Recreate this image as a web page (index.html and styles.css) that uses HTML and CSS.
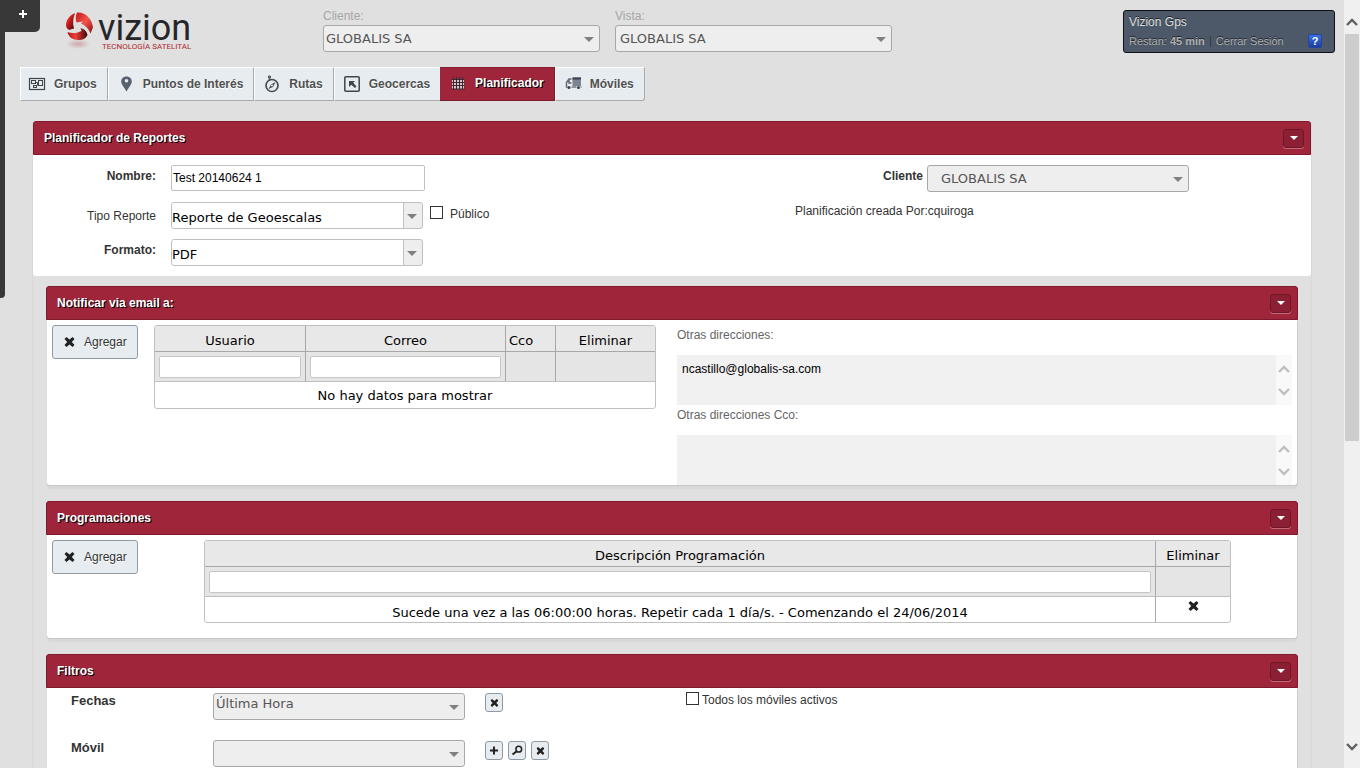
FILE: index.html
```html
<!DOCTYPE html>
<html lang="es">
<head>
<meta charset="utf-8">
<title>Vizion - Planificador</title>
<link rel="stylesheet" href="styles.css">
</head>
<body>
<svg class="defs" width="0" height="0" aria-hidden="true">
  <symbol id="i-cross" viewBox="0 0 10 10"><path d="M0 2 2 0 5 2.6 8 0 10 2 7.3 5 10 8 8 10 5 7.4 2 10 0 8 2.7 5z" fill="#222"/></symbol>
  <symbol id="i-caret" viewBox="0 0 8 4"><path d="M0 0h8L4 4z" fill="#fff"/></symbol>
  <symbol id="i-up" viewBox="0 0 12 8"><path d="M1 7 6 2l5 5" fill="none" stroke="currentColor" stroke-width="2.4"/></symbol>
  <symbol id="i-down" viewBox="0 0 12 8"><path d="M1 1l5 5 5-5" fill="none" stroke="currentColor" stroke-width="2.4"/></symbol>
</svg>

<div class="app">
  <header class="top">
    <svg class="logo" viewBox="0 0 130 46" role="img" aria-label="vizion tecnología satelital">
      <defs>
        <linearGradient id="ga" x1="0" y1="0" x2="1" y2="1"><stop offset="0" stop-color="#c2161b"/><stop offset=".5" stop-color="#f2564c"/><stop offset="1" stop-color="#8d0d12"/></linearGradient>
        <linearGradient id="gb" x1="0" y1="0" x2="1" y2="0"><stop offset="0" stop-color="#b3151a"/><stop offset=".4" stop-color="#f0403a"/><stop offset="1" stop-color="#3d0508"/></linearGradient>
        <linearGradient id="gc" x1="0" y1="0" x2="1" y2="1"><stop offset="0" stop-color="#f5766c"/><stop offset=".4" stop-color="#d01e20"/><stop offset="1" stop-color="#3a0406"/></linearGradient>
        <radialGradient id="gr"><stop offset="0" stop-color="#b0545a" stop-opacity=".4"/><stop offset="1" stop-color="#b0545a" stop-opacity="0"/></radialGradient>
      </defs>
      <ellipse cx="14" cy="35" rx="12" ry="5" fill="url(#gr)"/>
      <path d="M11 4C6 6 2 11 2 16c0 2 1 4 3 5l5-1.500c-1.500-5-1-10 1-15.500z" fill="url(#gc)"/>
      <path d="M13 3.500c8-1 15 6 16 15l-2.500 6c-2-5-5-8-9.500-10l2-2-6.500 1c-1-3-1-7 .5-10z" fill="url(#ga)"/>
      <path d="M3.500 23c6 2 10 1 14-1l-1-3c4 1 6 3 7 7-2 4-5 5-9 5-6 0-10-3-11-8z" fill="url(#gb)"/>
      <text x="34" y="31" class="logo-name">vizion</text>
      <text x="38" y="40" class="logo-tag">TECNOLOGÍA SATELITAL</text>
    </svg>
    <div class="field">
      <label for="cliente">Cliente:</label>
      <span class="combo"><select id="cliente"><option>GLOBALIS SA</option></select></span>
    </div>
    <div class="field">
      <label for="vista">Vista:</label>
      <span class="combo"><select id="vista" class="pad-l"><option>GLOBALIS SA</option></select></span>
    </div>
    <div class="user">
      <div class="user-name">Vizion Gps</div>
      <div class="user-line">
        <span>Restan: <b>45 min</b></span><i class="sep"></i><a href="#">Cerrar Sesión</a>
        <button class="help" type="button">?</button>
      </div>
    </div>
  </header>

  <nav class="tabs">
    <a href="#"><svg viewBox="0 0 18 18"><g fill="none" stroke="#3f454b"><rect x="1.500" y="3.500" width="15" height="11" stroke-width="1.200"/><rect x="3.500" y="5.500" width="4" height="3"/><rect x="10.500" y="5.500" width="4" height="5"/><rect x="5.500" y="10.500" width="3" height="2"/><path d="M7.500 7.500h2v3"/></g></svg>Grupos</a>
    <a href="#"><svg viewBox="0 0 18 18"><path d="M9.500 1.500c-3.200 0-5.300 2.200-5.300 5 0 3 3 5.500 5.300 10 2.300-4.500 5.300-7 5.300-10 0-2.800-2.100-5-5.300-5z" fill="#59616f"/><circle cx="9.500" cy="5.800" r="1.800" fill="#e6ecef"/></svg>Puntos de Interés</a>
    <a href="#"><svg viewBox="0 0 18 18"><g fill="none" stroke="#474d53" stroke-width="1.700"><circle cx="9" cy="10.500" r="6"/><path d="M6 3.500 7.200 5"/><circle cx="6.500" cy="2" r="1" stroke-width="1.200"/></g><path d="M12.500 7 10 12l-4.500 2L8 9.500z" fill="#474d53"/><circle cx="9" cy="10.500" r="1" fill="#e6ecef"/></svg>Rutas</a>
    <a href="#"><svg viewBox="0 0 18 18"><rect x="1.800" y="1.800" width="14.400" height="14.400" rx="1" fill="none" stroke="#3f454b" stroke-width="1.500"/><path d="M6 6h6l-1.800 1.800 3.300 3.700-1.500 1.500-3.700-3.300L6 12z" fill="#3f454b"/></svg>Geocercas</a>
    <a href="#" class="on"><svg viewBox="0 0 18 18"><path d="M3 5h12v10H3z" fill="#d8c4c9"/><path d="M2.500 5.500h13M2.500 8.500h13M2.500 11.500h13M2.500 15h13M4.500 3v12M7.500 3v12M10.500 3v12M13.500 3v12" stroke="#3a2a30"/></svg>Planificador</a>
    <a href="#"><svg viewBox="0 0 18 18"><path d="M8.500 2.500h8.500v8.500H8.500z" fill="#7c8494"/><path d="M8.500 2.500h8.500v2H8.500z" fill="#39404b"/><path d="M7.500 4H5L2.500 7.500V12h1M5 4v4h2.500" fill="none" stroke="#5d6673" stroke-width="1.400"/><circle cx="5" cy="12.500" r="1.500" fill="#39404b"/><circle cx="14.500" cy="12.500" r="1.500" fill="#39404b"/><path d="M7.500 12h5M16.500 12h1" stroke="#39404b"/></svg>Móviles</a>
  </nav>

  <main class="wrap">
    <section>
      <h2 class="bar">Planificador de Reportes<button type="button" aria-label="Contraer"><svg><use href="#i-caret"/></svg></button></h2>
      <div class="report">
        <div class="rows">
          <div class="row"><label class="strong" for="nombre">Nombre:</label><input id="nombre" class="name" type="text" value="Test 20140624 1"></div>
          <div class="row">
            <label for="tipo">Tipo Reporte</label>
            <span class="combo white"><select id="tipo"><option>Reporte de Geoescalas</option></select></span>
            <label class="check"><input type="checkbox">Público</label>
          </div>
          <div class="row"><label class="strong" for="formato">Formato:</label><span class="combo white"><select id="formato"><option>PDF</option></select></span></div>
        </div>
        <div class="owner">
          <div class="owner-row"><label class="strong" for="cliente2">Cliente</label><span class="combo"><select id="cliente2" class="pad-xl"><option>GLOBALIS SA</option></select></span></div>
          <p>Planificación creada Por:cquiroga</p>
        </div>
      </div>
    </section>

    <section class="panel">
      <h2 class="bar">Notificar via email a:<button type="button" aria-label="Contraer"><svg><use href="#i-caret"/></svg></button></h2>
      <div class="body mail">
        <button class="add" type="button"><svg><use href="#i-cross"/></svg>Agregar</button>
        <table class="grid users">
          <colgroup><col class="c-user"><col class="c-mail"><col class="c-cco"><col></colgroup>
          <thead>
            <tr><th>Usuario</th><th>Correo</th><th class="left">Cco</th><th>Eliminar</th></tr>
            <tr class="filter"><td><input type="text" aria-label="Filtrar usuario"></td><td><input type="text" aria-label="Filtrar correo"></td><td></td><td></td></tr>
          </thead>
          <tbody><tr><td colspan="4">No hay datos para mostrar</td></tr></tbody>
        </table>
        <div class="others">
          <label for="otras">Otras direcciones:</label>
          <div class="area"><textarea id="otras">ncastillo@globalis-sa.com</textarea><div class="arrows"><svg><use href="#i-up"/></svg><svg><use href="#i-down"/></svg></div></div>
          <label for="cco">Otras direcciones Cco:</label>
          <div class="area"><textarea id="cco"></textarea><div class="arrows"><svg><use href="#i-up"/></svg><svg><use href="#i-down"/></svg></div></div>
        </div>
      </div>
    </section>

    <section class="panel">
      <h2 class="bar">Programaciones<button type="button" aria-label="Contraer"><svg><use href="#i-caret"/></svg></button></h2>
      <div class="body sched">
        <button class="add" type="button"><svg><use href="#i-cross"/></svg>Agregar</button>
        <table class="grid">
          <colgroup><col><col class="c-del"></colgroup>
          <thead>
            <tr><th>Descripción Programación</th><th>Eliminar</th></tr>
            <tr class="filter"><td><input type="text" aria-label="Filtrar descripción"></td><td></td></tr>
          </thead>
          <tbody><tr><td class="low">Sucede una vez a las 06:00:00 horas. Repetir cada 1 día/s. - Comenzando el 24/06/2014</td><td class="high"><button class="del" type="button" aria-label="Eliminar"><svg><use href="#i-cross"/></svg></button></td></tr></tbody>
        </table>
      </div>
    </section>

    <section class="panel">
      <h2 class="bar">Filtros<button type="button" aria-label="Contraer"><svg><use href="#i-caret"/></svg></button></h2>
      <div class="body filters">
        <div class="frow">
          <label for="fechas">Fechas</label>
          <span class="combo"><select id="fechas" class="raise"><option>Última Hora</option></select></span>
          <div class="tools"><button type="button" aria-label="Quitar"><svg viewBox="0 0 18 18"><use href="#i-cross" x="5" y="5" width="9" height="9"/></svg></button></div>
          <label class="check"><input type="checkbox">Todos los móviles activos</label>
        </div>
        <div class="frow">
          <label for="movil">Móvil</label>
          <span class="combo"><select id="movil"><option></option></select></span>
          <div class="tools">
            <button type="button" aria-label="Agregar"><svg viewBox="0 0 18 18"><path d="M9 4.500v9M4.500 9h9" stroke="#222" stroke-width="2.200"/></svg></button>
            <button type="button" aria-label="Buscar"><svg viewBox="0 0 18 18"><circle cx="11" cy="7.500" r="3.200" fill="none" stroke="#222" stroke-width="1.700"/><path d="M8.700 9.800 4 13.500" stroke="#222" stroke-width="2.200"/></svg></button>
            <button type="button" aria-label="Quitar"><svg viewBox="0 0 18 18"><use href="#i-cross" x="5" y="5" width="9" height="9"/></svg></button>
          </div>
        </div>
      </div>
    </section>
  </main>
</div>

<div class="scroll" aria-hidden="true"><svg><use href="#i-up"/></svg><div class="thumb"></div><svg class="end"><use href="#i-down"/></svg></div>

<div class="drawer"><button type="button" aria-label="Abrir"><svg viewBox="0 0 10 10"><path d="M5 1v8M1 5h8" stroke="#fff" stroke-width="2"/></svg></button></div>
</body>
</html>
```
FILE: styles.css
```css
* { box-sizing: border-box; }
body {
  margin: 0;
  height: 100vh;
  display: flex;
  overflow: hidden;
  background: #e0e0e0;
  color: #333;
  font: 12px/14px "Liberation Sans", Arial, sans-serif;
}
button, input, select, textarea { font: inherit; color: inherit; margin: 0; }
a { color: inherit; text-decoration: none; }
.defs { position: absolute; }
.app { flex: 1; min-width: 0; overflow: hidden; }

/* Header */
.top { display: flex; align-items: flex-start; height: 67px; padding: 9px 9px 0 64px; }
.logo { width: 130px; height: 46px; margin-right: 129px; flex: none; overflow: visible; }
.logo-name { font: 36px Roboto, sans-serif; fill: #26262a; }
.logo-tag { font: 8px Roboto, sans-serif; fill: #b0282e; }
.field { width: 277px; margin-right: 15px; color: #a6a6a6; }
.field label { display: block; height: 16px; }
.user {
  width: 212px; height: 43px; margin: 1px 0 0 auto; padding: 4px 5px;
  background: #4d5968; border: 1px solid #0d1014; border-radius: 3px;
  color: #e0e0e0; text-shadow: 0 -1px 0 #1c222a;
}
.user-line { display: flex; align-items: center; height: 14px; margin-top: 5px; padding-right: 7px; font-size: 11px; color: #b0b0b0; }
.sep { width: 1px; height: 11px; margin: 0 5px; background: #363f49; }
.help {
  width: 14px; height: 14px; margin-left: auto; padding: 0;
  border: 1px solid #2246a0; border-radius: 2px; background: linear-gradient(#3e6fe0, #1c3f9e);
  color: #fff; font-weight: bold; font-size: 11px; line-height: 12px; text-shadow: none;
}

/* Drop-downs */
.combo { position: relative; display: block; }
.combo select {
  appearance: none; display: block; width: 100%; height: 27px; padding: 0 26px 0 2px;
  border: 1px solid #a8a8a8; border-radius: 3px; background: #eee; color: #555;
  font: 13px "DejaVu Sans", Verdana, sans-serif;
}
.combo select.pad-l { padding-left: 4px; }
.combo select.pad-xl { padding-left: 13px; }
.combo select.raise { padding-bottom: 6px; }
.combo::after {
  content: ""; position: absolute; right: 6px; top: 12px; pointer-events: none;
  border: 5px solid transparent; border-top-color: #808080; border-bottom: 0;
}
.combo.white { width: 252px; }
.combo.white select {
  padding: 4px 20px 0 0; color: #000; border-color: #c0c0c0;
  background: linear-gradient(to left, #eee 18px, #c0c0c0 18px, #c0c0c0 19px, #fff 19px);
}

/* Tabs */
.tabs { display: flex; padding-left: 20px; }
.tabs a {
  display: flex; align-items: center; gap: 8px; height: 34px; padding: 0 10px 0 8px;
  background: #e6ecef; border: solid; border-width: 1px; border-color: #fff #a9a9a9 #a9a9a9 #fff;
  font-weight: bold; color: #505050; text-shadow: 0 1px 0 #fff;
}
.tabs a:first-child { padding-left: 7px; }
.tabs a:last-child { border-radius: 0 0 3px 0; }
.tabs svg { width: 18px; height: 18px; }
.tabs a:nth-child(4) { border-right: 0; }
.tabs a.on { padding-bottom: 2px; background: #9e253a; border-color: #8a1c30 #7c1a2c #7c1a2c #9e253a; color: #fff; text-shadow: 1px 1px 0 #000; }

/* Panels */
.wrap { margin: 20px 32px 0; border: solid #d8d8d8; border-width: 0 1px; }
.bar {
  display: flex; align-items: center; justify-content: space-between; height: 34px; margin: 0; padding: 0 6px 0 10px;
  background: #9e253a; border: 1px solid #7f1a2d; border-radius: 3px 3px 0 0;
  color: #fff; font-size: 12px; text-shadow: 1px 1px 0 #000;
}
.bar button {
  display: grid; place-items: center; width: 21px; height: 19px; padding: 0;
  background: #8b2035; border: 1px solid #6f1526; border-radius: 3px; box-shadow: 0 1px 0 #c46a7a;
}
.bar svg { width: 8px; height: 4px; }
.strong { font-weight: bold; }

.report { display: flex; justify-content: space-between; padding: 10px 122px 10px 0; background: #fff; border-radius: 0 0 3px 3px; }
.rows { display: grid; gap: 10px; }
.row { display: flex; align-items: flex-start; }
.row > label:first-child { width: 123px; margin-right: 15px; padding-top: 4px; text-align: right; }
.row:nth-child(2) > label:first-child { padding-top: 7px; }
.name { width: 254px; height: 26px; margin-bottom: 1px; padding: 0 1px; border: 1px solid #c0c0c0; border-radius: 2px; background: #fff; color: #000; }
.check { display: flex; align-items: flex-end; gap: 7px; }
.row .check { margin: 3px 0 0 7px; height: 16px; }
.check input { appearance: none; width: 13px; height: 13px; margin-bottom: 2px; border: 1px solid #333; background: #fff; }
.owner { width: 394px; }
.owner-row { display: flex; justify-content: flex-end; gap: 4px; }
.owner-row label { padding-top: 4px; }
.owner-row .combo { width: 262px; }
.owner p { margin: 12px 0 0; }

.panel { margin: 10px 13px 16px; }
.panel + .panel { margin-top: 0; }
.body {
  display: flex; margin: 0 1px; padding: 5px 5px 0; background: #fff;
  border-radius: 0 0 3px 3px; box-shadow: 0 1px 0 #c8c8c8, 1px 1px 0 #ccc, 0 4px 1px #d8d8d8;
}
.add {
  display: flex; align-items: center; gap: 9px; width: 86px; height: 34px; padding: 0 0 0 11px; flex: none;
  background: #e6ecef; border: 1px solid #8f9aa4; border-radius: 3px; text-shadow: 0 1px 0 #fff;
}
.add svg, .del svg { width: 11px; height: 10px; display: block; }

.grid {
  flex: 1; table-layout: fixed; border-collapse: separate; border-spacing: 0; align-self: flex-start;
  border: 1px solid #c0c0c0; border-radius: 3px; overflow: hidden;
  color: #000; font: 13px/16px "DejaVu Sans", Verdana, sans-serif; text-align: center;
}
.grid th { height: 26px; padding: 5px 4px 0; background: #e8e8e8; border-bottom: 1px solid #a8a8a8; border-right: 1px solid #a8a8a8; font-weight: normal; }
.grid th.left { padding-left: 3px; text-align: left; }
.grid td { height: 26px; padding: 2px 4px 0; border-right: 1px solid #a8a8a8; }
.sched .grid tbody td { height: 25px; }
.grid td.low { padding-top: 6px; }
.grid .filter td { height: 30px; padding: 0 4px; background: #e5e5e5; border-bottom: 1px solid #c0c0c0; }
.grid th:last-child, .grid td:last-child { border-right: 0; }
.grid input { display: block; width: 100%; height: 22px; border: 1px solid #c6c6c6; border-radius: 2px; background: #fff; }
.grid td.high { padding: 4px 0 0; vertical-align: top; }
.del { display: block; margin: 0 auto; padding: 0; border: 0; background: none; }
.mail .grid { flex: none; width: 502px; margin: 0 21px 0 16px; }
.c-user { width: 151px; }
.c-mail { width: 200px; }
.c-cco { width: 50px; }
.c-del { width: 74px; }

.others { flex: 1; color: #666; }
.others label { display: block; height: 30px; line-height: 20px; }
.area { display: flex; height: 50px; background: #f1f1f1; }
.area textarea { flex: 1; padding: 7px 5px; border: 0; background: none; color: #000; resize: none; overflow: hidden; }
.arrows { display: flex; flex-direction: column; justify-content: space-between; align-items: center; width: 16px; padding: 10px 0 9px; background: #f9f9f9; color: #bfbfbf; }
.arrows svg { width: 12px; height: 8px; }

.sched { padding-bottom: 15px; }
.sched .grid { margin: 0 61px 0 66px; }

.filters { flex-direction: column; gap: 20px; min-height: 120px; padding-left: 24px; }
.frow { display: flex; align-items: flex-start; }
.frow > label:first-child { width: 142px; padding-top: 1px; font-weight: bold; font-size: 13px; }
.frow .combo { width: 252px; }
.tools { display: flex; gap: 5px; width: 201px; margin-left: 20px; }
.frow + .frow .tools { margin-top: 1px; }
.tools button { width: 18px; height: 19px; padding: 0; background: #e6ecef; border: 1px solid #8f9aa4; border-radius: 3px; }
.tools svg { display: block; width: 16px; height: 17px; }
.frow .check { gap: 3px; height: 14px; }

/* Page scroll strip */
.scroll { display: flex; flex-direction: column; align-items: center; width: 16px; background: #f0f0f0; color: #606060; }
.scroll svg { width: 12px; height: 8px; margin: 18px 0 8px; flex: none; }
.scroll .end { margin: auto 0 17px; }
.thumb { width: 14px; height: 53%; background: #cdcdcd; }

/* Side drawer */
.drawer { position: absolute; left: 0; top: 0; width: 5px; height: 298px; background: #383838; border-radius: 0 0 4px 0; }
.drawer button { display: grid; place-items: center; width: 40px; height: 32px; padding: 0 0 4px 5px; border: 0; background: #383838; border-radius: 0 0 5px 0; }
.drawer svg { width: 10px; height: 10px; }
```
